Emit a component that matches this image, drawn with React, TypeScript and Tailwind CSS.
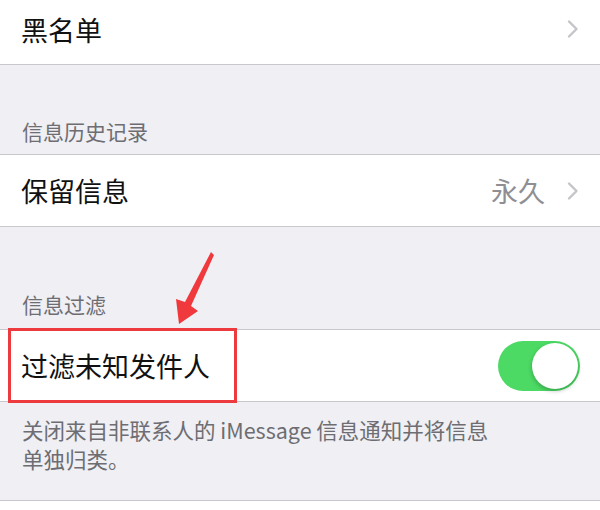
import React from "react";

function Chevron() {
  return (
    <svg width="12" height="20" viewBox="0 0 12 20" fill="none" aria-hidden>
      <path
        d="M2 2.5l7.5 7.5L2 17.5"
        stroke="#c4c4c9"
        strokeWidth="2.4"
        strokeLinecap="round"
        strokeLinejoin="round"
      />
    </svg>
  );
}

function Toggle() {
  return (
    <div className="relative h-[50px] w-[82px] rounded-full bg-[#4cd964]">
      <div className="absolute right-[2px] top-[2px] h-[46px] w-[46px] rounded-full bg-white shadow-[0_2px_4px_rgba(0,0,0,0.25)]" />
    </div>
  );
}

function Arrow() {
  return (
    <svg
      className="absolute left-0 top-0"
      width="600"
      height="510"
      viewBox="0 0 600 510"
      aria-hidden
    >
      <polygon
        points="211,252 214,255 191,306 198,311 179,324 176,299 185,302"
        fill="#f0393c"
      />
    </svg>
  );
}

export default function App() {
  return (
    <div className="relative h-[510px] w-[600px] overflow-hidden bg-[#efeff4] font-['Noto_Sans_CJK_SC',sans-serif]">
      <div className="flex h-[65px] items-center justify-between border-b border-[#c8c7cc] bg-white pb-[6px] pl-[21px] pr-[21px]">
        <span className="text-[27px] leading-none text-[#111]">黑名单</span>
        <Chevron />
      </div>

      <div className="flex h-[89px] items-end pb-[12px] pl-[22px] text-[21px] leading-none text-[#6d6d72]">
        信息历史记录
      </div>

      <div className="flex h-[73px] items-center justify-between border-y border-[#c8c7cc] bg-white pl-[21px] pr-[21px]">
        <span className="text-[27px] leading-none text-[#111]">保留信息</span>
        <div className="flex items-center gap-[22px]">
          <span className="text-[27px] leading-none text-[#8e8e93]">永久</span>
          <Chevron />
        </div>
      </div>

      <div className="flex h-[102px] items-end pb-[14px] pl-[22px] text-[21px] leading-none text-[#6d6d72]">
        信息过滤
      </div>

      <div className="flex h-[73px] items-center justify-between border-y border-[#c8c7cc] bg-white pl-[21px] pr-[20px]">
        <span className="text-[27px] leading-none text-[#111]">过滤未知发件人</span>
        <Toggle />
      </div>

      <div className="h-[99px] border-b border-[#c8c7cc] pl-[22px] pt-[13px] text-[21.5px] leading-[29px] text-[#6d6d72]">
        关闭来自非联系人的 iMessage 信息通知并将信息
        <br />
        单独归类。
      </div>
      <div className="h-[10px] bg-white" />

      <div className="absolute left-[8px] top-[328px] h-[75px] w-[229px] border-[3px] border-[#ec3a3e]" />
      <Arrow />
    </div>
  );
}
